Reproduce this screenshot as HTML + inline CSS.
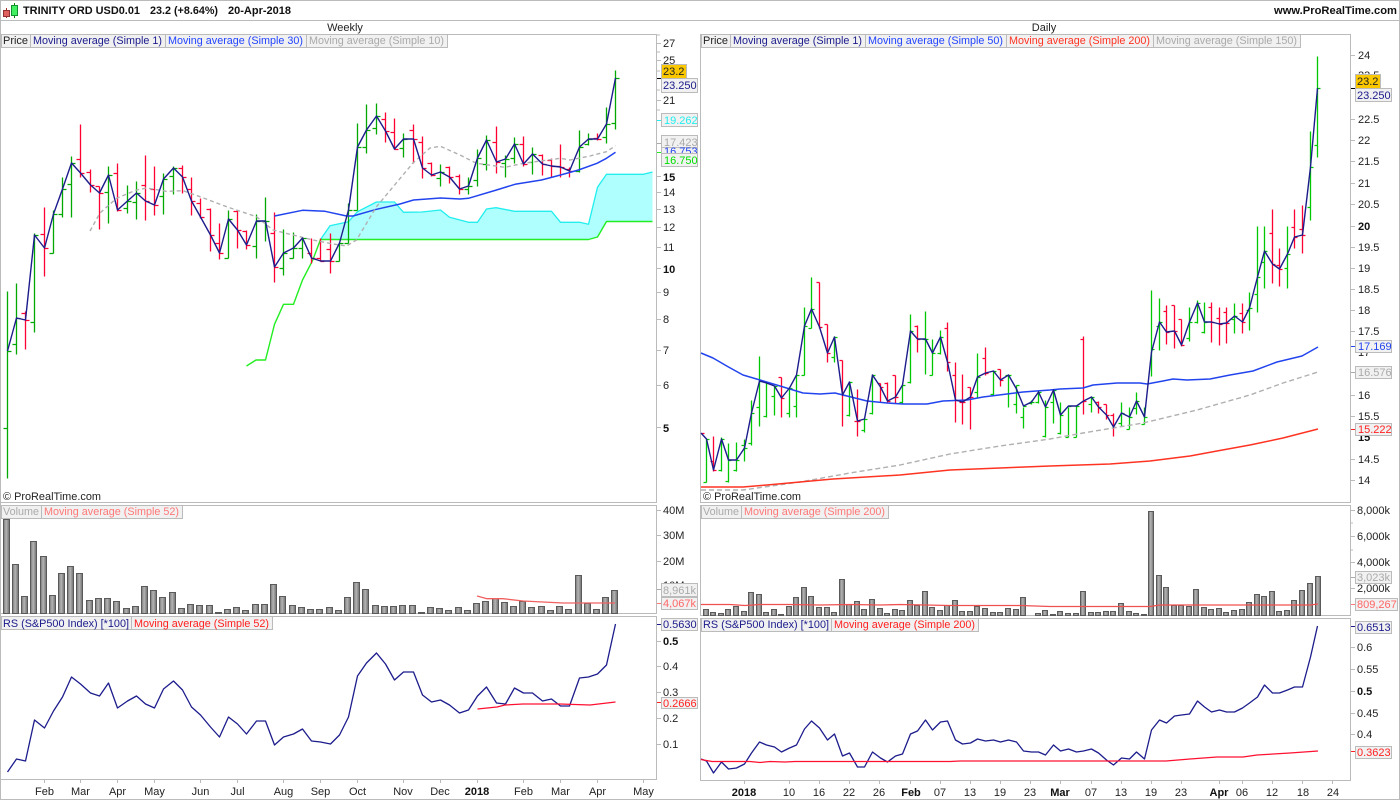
<!DOCTYPE html>
<html><head><meta charset="utf-8"><title>TRINITY ORD USD0.01</title>
<style>
html,body{margin:0;padding:0;background:#fff;width:1400px;height:800px;overflow:hidden}
svg{display:block;filter:blur(.25px)}
text{font-family:"Liberation Sans",sans-serif;font-size:11px;fill:#222}
.b{font-weight:bold;fill:#111}
.c{text-anchor:middle}
.crisp{shape-rendering:crispEdges;fill:none}
.bar{fill:none;stroke-width:1.3}
.ln{fill:none;stroke-linejoin:round}
.tag{fill:#f1f1f1;stroke:#bbb;stroke-width:1;shape-rendering:crispEdges}
.vol rect{fill:url(#vg);stroke:#5a5a5a;stroke-width:1;shape-rendering:crispEdges}
.vw rect{width:6px}
</style></head><body>
<svg width="1400" height="800" viewBox="0 0 1400 800" xmlns="http://www.w3.org/2000/svg">
<defs><linearGradient id="vg" x1="0" x2="1" y1="0" y2="0"><stop offset="0" stop-color="#777"/><stop offset=".45" stop-color="#b4b4b4"/><stop offset="1" stop-color="#6e6e6e"/></linearGradient></defs>

<!-- frames -->
<g class="crisp" stroke="#bbb">
<rect x="0.5" y="0.5" width="1399" height="799"/>
<path d="M0 20.5H1400"/>
<rect x="0.5" y="34.5" width="656" height="468"/>
<rect x="0.5" y="505.5" width="656" height="108"/>
<rect x="0.5" y="616.5" width="656" height="163"/>
<rect x="700.5" y="34.5" width="650" height="468"/>
<rect x="700.5" y="505.5" width="650" height="110"/>
<rect x="700.5" y="618.5" width="650" height="162"/>
<!-- axis ticks -->
<path d="M657 35H660M657 43.5H661M657 52H660M657 60.5H661M657 71H660M657 90H660M657 100.5H661M657 110H660M657 176.5H661M657 192.5H661M657 209.5H661M657 227.5H661M657 247.5H661M657 268.5H661M657 292.5H661M657 319.5H661M657 350.5H661M657 385.5H661M657 427.5H661"/>
<path d="M657 510.5H661M657 535.5H661M657 561.5H661M657 641.5H661M657 666.5H661M657 692.5H661M657 718.5H661M657 744.5H661"/>
<path d="M1351 55.5H1355M1351 119.5H1355M1351 140.5H1355M1351 161.5H1355M1351 183.5H1355M1351 204.5H1355M1351 226.5H1355M1351 247.5H1355M1351 268.5H1355M1351 289.5H1355M1351 310.5H1355M1351 331.5H1355M1351 395.5H1355M1351 416.5H1355M1351 459.5H1355M1351 480.5H1355"/>
<path d="M1351 510.5H1355M1351 523H1353M1351 536.5H1355M1351 550H1353M1351 562.5H1355M1351 588.5H1355M1351 647.5H1355M1351 669.5H1355M1351 691.5H1355M1351 713.5H1355M1351 734.5H1355"/>
<!-- date ticks -->
<path d="M44.5 780V783M80.5 780V783M117.5 780V783M154.5 780V783M200.5 780V783M237.5 780V783M283.5 780V783M320.5 780V783M357.5 780V783M403.5 780V783M440.5 780V783M477.5 780V783M523.5 780V783M560.5 780V783M597.5 780V783M643.5 780V783"/>
<path d="M744.5 781V784M789.5 781V784M819.5 781V784M849.5 781V784M879.5 781V784M910.5 781V784M940.5 781V784M970.5 781V784M1000.5 781V784M1030.5 781V784M1060.5 781V784M1091.5 781V784M1121.5 781V784M1151.5 781V784M1181.5 781V784M1219.5 781V784M1242.5 781V784M1272.5 781V784M1302.5 781V784M1332.5 781V784"/>
</g>

<!-- title -->
<g shape-rendering="crispEdges">
<path d="M6.5 8V18" stroke="#a03030"/><rect x="3.5" y="10.5" width="6" height="6" fill="#e06060" stroke="#903030"/>
<path d="M14.5 3V18" stroke="#108010"/><rect x="11.5" y="5.5" width="6" height="10" fill="#40f060" stroke="#109030"/>
</g>
<text x="23" y="14" class="b" textLength="117" lengthAdjust="spacingAndGlyphs">TRINITY ORD USD0.01</text>
<text x="150" y="14" class="b" textLength="68" lengthAdjust="spacingAndGlyphs">23.2 (+8.64%)</text>
<text x="228" y="14" class="b" textLength="63" lengthAdjust="spacingAndGlyphs">20-Apr-2018</text>
<text x="1274" y="14" class="b" textLength="123" lengthAdjust="spacingAndGlyphs">www.ProRealTime.com</text>
<text x="345" y="31" class="c">Weekly</text>
<text x="1044" y="31" class="c">Daily</text>

<!-- WEEKLY PRICE -->
<path d="M320.5 239.5L330 225.7L348.5 221.7L357.5 211.7L376.5 202L394.5 202L403.5 212.3L422 212L440.5 210L449.5 217.3L460 220L468.5 222.3L477.5 222.3L486.5 209L496 207.7L514.5 211.3L551.5 211.3L560.5 222.3L579.5 222.3L588.5 224.3L597.5 187.3L606.5 174.3L643.5 174.3L652.5 172V221.5H606.5L597.5 237.5L588.5 239.5Z" fill="#b0ffff"/>
<path class="ln" stroke="#22eeee" stroke-width="1.3" d="M320.5 239.5L330 225.7L348.5 221.7L357.5 211.7L376.5 202L394.5 202L403.5 212.3L422 212L440.5 210L449.5 217.3L460 220L468.5 222.3L477.5 222.3L486.5 209L496 207.7L514.5 211.3L551.5 211.3L560.5 222.3L579.5 222.3L588.5 224.3L597.5 187.3L606.5 174.3L643.5 174.3L652.5 172"/>
<path class="ln" stroke="#22ee22" stroke-width="1.4" d="M246.5 366L256 360H265.5L274.5 324.3L283.5 304.3H293.5L302.5 280L312.5 260.7L320.5 239.5H588.5L597.5 237L606.5 221.5H652.5"/>

<g transform="translate(0 .5)">
<path class="bar" stroke="#00a800" d="M7.5 291V478M3.5 428H7.5M7.5 351H11.5M16.5 283V354M12.5 344H16.5M16.5 318H20.5M34.5 233V332M30.5 322H34.5M34.5 235H38.5M53.5 210V253M49.5 253H53.5M53.5 214H57.5M62.5 177V217M58.5 214H62.5M62.5 189H66.5M71.5 156V217M67.5 184H71.5M71.5 163H75.5M108.5 166V223M104.5 192H108.5M108.5 175H112.5M127.5 185V213M123.5 208H127.5M127.5 201H131.5M136.5 181V219M132.5 202H136.5M136.5 193H140.5M163.5 173V214M159.5 196H163.5M163.5 179H167.5M173.5 166V194M169.5 176H173.5M173.5 168H177.5M228.5 210V258M224.5 258H228.5M228.5 219H232.5M256.5 214V258M252.5 246H256.5M256.5 221H260.5M265.5 197V241M261.5 221H265.5M265.5 221H269.5M283.5 229V275M279.5 268H283.5M283.5 253H287.5M293.5 232V258M289.5 258H293.5M293.5 248H297.5M302.5 238V258M298.5 248H302.5M302.5 238H306.5M339.5 243V261M335.5 261H339.5M339.5 243H343.5M348.5 203V243M344.5 243H348.5M348.5 210H352.5M357.5 123V210M353.5 210H357.5M357.5 147H361.5M366.5 104V153M362.5 147H366.5M366.5 130H370.5M376.5 103V134M372.5 128H376.5M376.5 116H380.5M403.5 133V157M399.5 148H403.5M403.5 139H407.5M440.5 164V186M436.5 178H440.5M440.5 172H444.5M468.5 177V194M464.5 189H468.5M468.5 186H472.5M477.5 149V186M473.5 180H477.5M477.5 158H481.5M486.5 135V170M482.5 164H486.5M486.5 140H490.5M505.5 155V177M501.5 163H505.5M505.5 159H509.5M514.5 137V163M510.5 158H514.5M514.5 144H518.5M532.5 147V174M528.5 162H532.5M532.5 154H536.5M579.5 130V172M575.5 171H579.5M579.5 147H583.5M588.5 133V145M584.5 144H588.5M588.5 139H592.5M606.5 107V143M602.5 137H606.5M606.5 124H610.5M615.5 70V129M611.5 123H615.5M615.5 78H619.5"/>
<path class="bar" stroke="#ff0033" d="M25.5 311V349M21.5 313H25.5M25.5 320H29.5M44.5 207V276M40.5 234H44.5M44.5 248H48.5M80.5 124V177M76.5 159H80.5M80.5 173H84.5M90.5 169V192M86.5 172H90.5M90.5 185H94.5M99.5 186V229M95.5 186H99.5M99.5 193H103.5M117.5 163V211M113.5 173H117.5M117.5 210H121.5M145.5 155V220M141.5 185H145.5M145.5 201H149.5M154.5 166V215M150.5 189H154.5M154.5 205H158.5M182.5 165V193M178.5 168H182.5M182.5 177H186.5M191.5 177V215M187.5 189H191.5M191.5 201H195.5M200.5 198V218M196.5 203H200.5M200.5 217H204.5M210.5 208V251M206.5 209H210.5M210.5 235H214.5M219.5 223V259M215.5 243H219.5M219.5 253H223.5M237.5 210V248M233.5 211H237.5M237.5 230H241.5M246.5 230V249M242.5 231H246.5M246.5 245H250.5M274.5 212V282M270.5 233H274.5M274.5 267H278.5M311.5 238V263M307.5 253H311.5M311.5 258H315.5M320.5 238V260M316.5 258H320.5M320.5 261H324.5M330.5 233V273M326.5 249H330.5M330.5 261H334.5M385.5 112V142M381.5 119H385.5M385.5 131H389.5M394.5 118V149M390.5 132H394.5M394.5 149H398.5M413.5 124V163M409.5 130H413.5M413.5 139H417.5M422.5 136V178M418.5 142H422.5M422.5 168H426.5M431.5 162V176M427.5 163H431.5M431.5 175H435.5M449.5 166V183M445.5 167H449.5M449.5 177H453.5M459.5 174V194M455.5 176H459.5M459.5 189H463.5M496.5 126V173M492.5 142H496.5M496.5 162H500.5M523.5 136V166M519.5 144H523.5M523.5 164H527.5M542.5 154V175M538.5 155H542.5M542.5 164H546.5M551.5 158V177M547.5 160H551.5M551.5 166H555.5M560.5 144V177M556.5 166H560.5M560.5 167H564.5M569.5 167V177M565.5 169H569.5M569.5 171H573.5M597.5 133V140M593.5 138H597.5M597.5 139H601.5"/>
</g>
<path class="ln" stroke="#2244ee" stroke-width="1.5" d="M274.5 216L302.5 210.3L325 211.3L346.5 216L353 216L376.5 209.3L400 204L413.5 200L440.5 198L460 199L468.5 198.3L496.5 190L515 184.3L541.5 180L560.5 175L578.5 170L597 163.3L606.5 158.3L615.5 152.3"/>
<path class="ln" stroke="#b0b0b0" stroke-width="1.4" stroke-dasharray="4 3" d="M90 231L100 213L116.5 198.3L136.5 190L146.5 188L166.5 191.3L183 190.7L200 196.7L226.5 206.7L256.5 216.7L273 230L313 240L333 244L346.5 246L356.5 240L376.5 206.7L413 163L430 148L440.5 146.3L460 155L476.5 163.3L505 167.3L523.5 163.3L560.5 158.3L570 160L590 156L606.5 151.7L615.5 145.7"/>
<polyline class="ln" stroke="#1c1c8c" stroke-width="1.4" points="7.5,351 16.5,318 25.5,320 34.5,235 44.5,248 53.5,214 62.5,189 71.5,163 80.5,173 90.5,185 99.5,193 108.5,175 117.5,210 127.5,201 136.5,193 145.5,201 154.5,205 163.5,179 173.5,168 182.5,177 191.5,201 200.5,217 210.5,235 219.5,253 228.5,219 237.5,230 246.5,245 256.5,221 265.5,221 274.5,267 283.5,253 293.5,248 302.5,238 311.5,258 320.5,261 330.5,261 339.5,243 348.5,210 357.5,147 366.5,130 376.5,116 385.5,131 394.5,149 403.5,139 413.5,139 422.5,168 431.5,175 440.5,172 449.5,177 459.5,189 468.5,186 477.5,158 486.5,140 496.5,162 505.5,159 514.5,144 523.5,164 532.5,154 542.5,164 551.5,166 560.5,167 569.5,171 579.5,147 588.5,139 597.5,139 606.5,124 615.5,78"/>

<!-- DAILY PRICE -->
<g transform="translate(0 .5)">
<path class="bar" stroke="#00c800" d="M706.5 438V482M703.5 482H706.5M706.5 439H709.5M721.5 437V471M718.5 470H721.5M721.5 439H724.5M728.5 443V482M725.5 481H728.5M728.5 460H731.5M736.5 442V471M733.5 470H736.5M736.5 460H739.5M744.5 439V461M741.5 445H744.5M744.5 448H747.5M751.5 400V445M748.5 443H751.5M751.5 413H754.5M759.5 356V426M756.5 407H759.5M759.5 381H762.5M766.5 383V417M763.5 416H766.5M766.5 383H769.5M774.5 385V415M771.5 396H774.5M774.5 386H777.5M789.5 387V417M786.5 413H789.5M789.5 388H792.5M796.5 375V417M793.5 406H796.5M796.5 375H799.5M804.5 307V375M801.5 375H804.5M804.5 326H807.5M811.5 277V328M808.5 328H811.5M811.5 309H814.5M834.5 336V362M831.5 357H834.5M834.5 337H837.5M849.5 381V416M846.5 415H849.5M849.5 382H852.5M864.5 419V432M861.5 430H864.5M864.5 419H867.5M872.5 374V414M869.5 413H872.5M872.5 375H875.5M902.5 385V403M899.5 402H902.5M902.5 385H905.5M910.5 314V383M907.5 382H910.5M910.5 331H913.5M925.5 311V374M922.5 339H925.5M925.5 339H928.5M932.5 339V375M929.5 375H932.5M932.5 353H935.5M940.5 330V354M937.5 353H940.5M940.5 337H943.5M977.5 353V397M974.5 392H977.5M977.5 377H980.5M993.5 370V395M990.5 394H993.5M993.5 371H996.5M1008.5 375V407M1005.5 375H1008.5M1008.5 375H1011.5M1016.5 385V413M1013.5 404H1016.5M1016.5 385H1019.5M1023.5 407V428M1020.5 417H1023.5M1023.5 406H1026.5M1031.5 400V404M1028.5 403H1031.5M1031.5 402H1034.5M1038.5 392V403M1035.5 402H1038.5M1038.5 392H1041.5M1045.5 400V437M1042.5 436H1045.5M1045.5 407H1048.5M1053.5 389V423M1050.5 402H1053.5M1053.5 390H1056.5M1060.5 402V434M1057.5 433H1060.5M1060.5 415H1063.5M1068.5 407V437M1065.5 437H1068.5M1068.5 406H1071.5M1076.5 406V437M1073.5 437H1076.5M1076.5 406H1079.5M1091.5 397V412M1088.5 404H1091.5M1091.5 397H1094.5M1121.5 402V426M1118.5 423H1121.5M1121.5 413H1124.5M1129.5 407V429M1126.5 429H1129.5M1129.5 417H1132.5M1136.5 392V414M1133.5 408H1136.5M1136.5 401H1139.5M1144.5 407V424M1141.5 424H1144.5M1144.5 417H1147.5M1151.5 290V376M1151.5 349H1154.5M1159.5 298V350M1156.5 326H1159.5M1159.5 322H1162.5M1189.5 307V341M1186.5 338H1189.5M1189.5 322H1192.5M1197.5 300V323M1194.5 322H1197.5M1197.5 303H1200.5M1204.5 302V333M1201.5 332H1204.5M1204.5 322H1207.5M1234.5 303V333M1231.5 319H1234.5M1234.5 316H1237.5M1249.5 292V330M1246.5 310H1249.5M1249.5 308H1252.5M1257.5 226V312M1254.5 294H1257.5M1257.5 277H1260.5M1264.5 226V288M1261.5 262H1264.5M1264.5 251H1267.5M1287.5 226V288M1284.5 268H1287.5M1287.5 254H1290.5M1310.5 131V220M1307.5 207H1310.5M1310.5 167H1313.5M1317.5 56V157M1314.5 145H1317.5M1317.5 88H1320.5"/>
<path class="bar" stroke="#ff0033" d="M701.5 433H704.5M713.5 436V471M710.5 461H713.5M713.5 470H716.5M781.5 377V417M778.5 377H781.5M781.5 398H784.5M819.5 282V328M816.5 282H819.5M819.5 327H822.5M827.5 324V362M824.5 324H827.5M827.5 353H830.5M842.5 360V426M839.5 360H842.5M842.5 395H845.5M857.5 389V436M854.5 421H857.5M857.5 421H860.5M880.5 383V402M877.5 383H880.5M880.5 387H883.5M887.5 382V403M884.5 383H887.5M887.5 401H890.5M895.5 375V403M892.5 375H895.5M895.5 397H898.5M917.5 325V352M914.5 326H917.5M917.5 339H920.5M947.5 322V371M944.5 328H947.5M947.5 362H950.5M955.5 362V422M952.5 375H955.5M955.5 400H958.5M962.5 374V424M959.5 402H962.5M962.5 402H965.5M970.5 387V429M967.5 387H970.5M970.5 397H973.5M985.5 347V375M982.5 358H985.5M985.5 373H988.5M1000.5 369V386M997.5 369H1000.5M1000.5 380H1003.5M1083.5 336V414M1080.5 339H1083.5M1083.5 401H1086.5M1098.5 401V413M1095.5 402H1098.5M1098.5 407H1101.5M1106.5 404V419M1103.5 404H1106.5M1106.5 415H1109.5M1113.5 413V436M1110.5 415H1113.5M1113.5 427H1116.5M1166.5 305V344M1163.5 311H1166.5M1166.5 332H1169.5M1174.5 305V348M1171.5 305H1174.5M1174.5 331H1177.5M1181.5 319V346M1178.5 319H1181.5M1181.5 345H1184.5M1211.5 302V342M1208.5 307H1211.5M1211.5 322H1214.5M1219.5 307V345M1216.5 318H1219.5M1219.5 324H1222.5M1226.5 307V343M1223.5 312H1226.5M1226.5 323H1229.5M1242.5 303V333M1239.5 313H1242.5M1242.5 322H1245.5M1272.5 209V283M1269.5 233H1272.5M1272.5 264H1275.5M1279.5 248V286M1276.5 265H1279.5M1279.5 269H1282.5M1294.5 209V248M1291.5 227H1294.5M1294.5 237H1297.5M1302.5 205V253M1299.5 229H1302.5M1302.5 235H1305.5"/>
</g>
<path class="ln" stroke="#2244ee" stroke-width="1.5" d="M701 353L713 358L728.5 367L743 375L760 380L780 386L803 393L820 394L835 393L847 396L867 401L887 403L903 404L927 404L943 401L967 400L983 397L1007 394L1023 392L1050 390L1060 389L1083 388L1093 385L1117 383L1140 383L1147 384L1163 381L1173 379L1187 380L1210 379L1230 375L1253 371L1277 362L1302 356L1318 347"/>
<path class="ln" stroke="#b0b0b0" stroke-width="1.4" stroke-dasharray="5 3" d="M701 490L743 490L800 482L850 473L900 465L950 454L1000 446L1050 439L1083 433L1143 423L1197 410L1250 395L1283 383L1318 372"/>
<path class="ln" stroke="#ff3322" stroke-width="1.5" d="M701 487L743 487L767 485L833 479L900 475L950 470L1000 468L1050 466L1110 464L1150 461L1190 456L1217 451L1250 445L1283 438L1318 429"/>
<polyline class="ln" stroke="#1c1c8c" stroke-width="1.4" points="701,433 706.5,439 713.5,470 721.5,439 728.5,460 736.5,460 744.5,448 751.5,413 759.5,381 766.5,383 774.5,386 781.5,398 789.5,388 796.5,375 804.5,326 811.5,309 819.5,327 827.5,353 834.5,337 842.5,395 849.5,382 857.5,421 864.5,419 872.5,375 880.5,387 887.5,401 895.5,397 902.5,385 910.5,331 917.5,339 925.5,339 932.5,353 940.5,337 947.5,362 955.5,400 962.5,402 970.5,397 977.5,377 985.5,373 993.5,371 1000.5,380 1008.5,375 1016.5,389 1023.5,406 1031.5,402 1038.5,392 1045.5,407 1053.5,390 1060.5,415 1068.5,406 1076.5,406 1083.5,401 1091.5,397 1098.5,407 1106.5,415 1113.5,427 1121.5,413 1129.5,417 1136.5,401 1144.5,417 1151.5,352 1159.5,322 1166.5,332 1174.5,331 1181.5,345 1189.5,322 1197.5,303 1204.5,322 1211.5,322 1219.5,324 1226.5,323 1234.5,316 1242.5,322 1249.5,308 1257.5,277 1264.5,251 1272.5,264 1279.5,269 1287.5,254 1294.5,237 1302.5,235 1310.5,167 1317.5,88"/>

<!-- WEEKLY VOLUME -->
<g class="vol vw">
<rect x="3.5" y="519.5" width="7" height="94"/><rect x="12.5" y="564.5" width="7" height="49"/><rect x="21.5" y="596.5" width="7" height="17"/><rect x="30.5" y="541.5" width="7" height="72"/><rect x="40.5" y="556.5" width="7" height="57"/><rect x="49.5" y="595.5" width="7" height="18"/><rect x="58.5" y="573.5" width="7" height="40"/><rect x="67.5" y="566.5" width="7" height="47"/><rect x="76.5" y="573.5" width="7" height="40"/><rect x="86.5" y="600.5" width="7" height="13"/><rect x="95.5" y="598.5" width="7" height="15"/><rect x="104.5" y="598.5" width="7" height="15"/><rect x="113.5" y="601.5" width="7" height="12"/><rect x="123.5" y="608.5" width="7" height="5"/><rect x="132.5" y="606.5" width="7" height="7"/><rect x="141.5" y="586.5" width="7" height="27"/><rect x="150.5" y="590.5" width="7" height="23"/><rect x="159.5" y="597.5" width="7" height="16"/><rect x="169.5" y="592.5" width="7" height="21"/><rect x="178.5" y="608.5" width="7" height="5"/><rect x="187.5" y="604.5" width="7" height="9"/><rect x="196.5" y="605.5" width="7" height="8"/><rect x="206.5" y="605.5" width="7" height="8"/><rect x="215.5" y="612.5" width="7" height="1"/><rect x="224.5" y="609.5" width="7" height="4"/><rect x="233.5" y="607.5" width="7" height="6"/><rect x="242.5" y="610.5" width="7" height="3"/><rect x="252.5" y="604.5" width="7" height="9"/><rect x="261.5" y="604.5" width="7" height="9"/><rect x="270.5" y="584.5" width="7" height="29"/><rect x="279.5" y="596.5" width="7" height="17"/><rect x="289.5" y="605.5" width="7" height="8"/><rect x="298.5" y="607.5" width="7" height="6"/><rect x="307.5" y="609.5" width="7" height="4"/><rect x="316.5" y="609.5" width="7" height="4"/><rect x="326.5" y="607.5" width="7" height="6"/><rect x="335.5" y="610.5" width="7" height="3"/><rect x="344.5" y="597.5" width="7" height="16"/><rect x="353.5" y="582.5" width="7" height="31"/><rect x="362.5" y="589.5" width="7" height="24"/><rect x="372.5" y="605.5" width="7" height="8"/><rect x="381.5" y="606.5" width="7" height="7"/><rect x="390.5" y="606.5" width="7" height="7"/><rect x="399.5" y="605.5" width="7" height="8"/><rect x="409.5" y="605.5" width="7" height="8"/><rect x="418.5" y="612.5" width="7" height="1"/><rect x="427.5" y="607.5" width="7" height="6"/><rect x="436.5" y="608.5" width="7" height="5"/><rect x="445.5" y="610.5" width="7" height="3"/><rect x="455.5" y="607.5" width="7" height="6"/><rect x="464.5" y="610.5" width="7" height="3"/><rect x="473.5" y="603.5" width="7" height="10"/><rect x="482.5" y="601.5" width="7" height="12"/><rect x="492.5" y="598.5" width="7" height="15"/><rect x="501.5" y="602.5" width="7" height="11"/><rect x="510.5" y="606.5" width="7" height="7"/><rect x="519.5" y="601.5" width="7" height="12"/><rect x="528.5" y="607.5" width="7" height="6"/><rect x="538.5" y="606.5" width="7" height="7"/><rect x="547.5" y="610.5" width="7" height="3"/><rect x="556.5" y="606.5" width="7" height="7"/><rect x="565.5" y="609.5" width="7" height="4"/><rect x="575.5" y="575.5" width="7" height="38"/><rect x="584.5" y="603.5" width="7" height="10"/><rect x="593.5" y="609.5" width="7" height="4"/><rect x="602.5" y="597.5" width="7" height="16"/><rect x="611.5" y="590.5" width="7" height="23"/>
</g>
<path class="ln" stroke="#f06060" stroke-width="1.3" d="M477 596L487 598.7L503 598.7L523 601L563 603L615 603"/>

<!-- DAILY VOLUME -->
<g class="vol">
<rect x="703.5" y="609.5" width="5" height="6"/><rect x="710.5" y="612.5" width="5" height="3"/><rect x="718.5" y="613.5" width="5" height="2"/><rect x="725.5" y="609.5" width="5" height="6"/><rect x="733.5" y="606.5" width="5" height="9"/><rect x="741.5" y="611.5" width="5" height="4"/><rect x="748.5" y="592.5" width="5" height="23"/><rect x="756.5" y="594.5" width="5" height="21"/><rect x="763.5" y="612.5" width="5" height="3"/><rect x="771.5" y="609.5" width="5" height="6"/><rect x="778.5" y="614.5" width="5" height="1"/><rect x="786.5" y="606.5" width="5" height="9"/><rect x="793.5" y="597.5" width="5" height="18"/><rect x="801.5" y="587.5" width="5" height="28"/><rect x="808.5" y="596.5" width="5" height="19"/><rect x="816.5" y="607.5" width="5" height="8"/><rect x="824.5" y="607.5" width="5" height="8"/><rect x="831.5" y="612.5" width="5" height="3"/><rect x="839.5" y="579.5" width="5" height="36"/><rect x="846.5" y="604.5" width="5" height="11"/><rect x="854.5" y="601.5" width="5" height="14"/><rect x="861.5" y="609.5" width="5" height="6"/><rect x="869.5" y="599.5" width="5" height="16"/><rect x="877.5" y="608.5" width="5" height="7"/><rect x="884.5" y="613.5" width="5" height="2"/><rect x="892.5" y="609.5" width="5" height="6"/><rect x="899.5" y="610.5" width="5" height="5"/><rect x="907.5" y="600.5" width="5" height="15"/><rect x="914.5" y="605.5" width="5" height="10"/><rect x="922.5" y="591.5" width="5" height="24"/><rect x="929.5" y="607.5" width="5" height="8"/><rect x="937.5" y="610.5" width="5" height="5"/><rect x="944.5" y="605.5" width="5" height="10"/><rect x="952.5" y="600.5" width="5" height="15"/><rect x="959.5" y="611.5" width="5" height="4"/><rect x="967.5" y="611.5" width="5" height="4"/><rect x="974.5" y="606.5" width="5" height="9"/><rect x="982.5" y="608.5" width="5" height="7"/><rect x="990.5" y="612.5" width="5" height="3"/><rect x="997.5" y="612.5" width="5" height="3"/><rect x="1005.5" y="608.5" width="5" height="7"/><rect x="1013.5" y="609.5" width="5" height="6"/><rect x="1020.5" y="597.5" width="5" height="18"/><rect x="1035.5" y="613.5" width="5" height="2"/><rect x="1042.5" y="610.5" width="5" height="5"/><rect x="1050.5" y="614.5" width="5" height="1"/><rect x="1057.5" y="611.5" width="5" height="4"/><rect x="1065.5" y="613.5" width="5" height="2"/><rect x="1073.5" y="613.5" width="5" height="2"/><rect x="1080.5" y="591.5" width="5" height="24"/><rect x="1088.5" y="612.5" width="5" height="3"/><rect x="1095.5" y="612.5" width="5" height="3"/><rect x="1103.5" y="611.5" width="5" height="4"/><rect x="1110.5" y="611.5" width="5" height="4"/><rect x="1118.5" y="603.5" width="5" height="12"/><rect x="1126.5" y="611.5" width="5" height="4"/><rect x="1133.5" y="613.5" width="5" height="2"/><rect x="1141.5" y="614.5" width="5" height="1"/><rect x="1148.5" y="511.5" width="5" height="104"/><rect x="1156.5" y="575.5" width="5" height="40"/><rect x="1163.5" y="587.5" width="5" height="28"/><rect x="1171.5" y="605.5" width="5" height="10"/><rect x="1178.5" y="605.5" width="5" height="10"/><rect x="1186.5" y="606.5" width="5" height="9"/><rect x="1193.5" y="589.5" width="5" height="26"/><rect x="1201.5" y="607.5" width="5" height="8"/><rect x="1208.5" y="609.5" width="5" height="6"/><rect x="1216.5" y="608.5" width="5" height="7"/><rect x="1223.5" y="612.5" width="5" height="3"/><rect x="1231.5" y="610.5" width="5" height="5"/><rect x="1239.5" y="609.5" width="5" height="6"/><rect x="1246.5" y="602.5" width="5" height="13"/><rect x="1254.5" y="594.5" width="5" height="21"/><rect x="1261.5" y="596.5" width="5" height="19"/><rect x="1269.5" y="591.5" width="5" height="24"/><rect x="1276.5" y="611.5" width="5" height="4"/><rect x="1284.5" y="610.5" width="5" height="5"/><rect x="1291.5" y="600.5" width="5" height="15"/><rect x="1299.5" y="590.5" width="5" height="25"/><rect x="1307.5" y="583.5" width="5" height="32"/><rect x="1315.5" y="576.5" width="5" height="39"/>
</g>
<path class="ln" stroke="#f05050" stroke-width="1.3" d="M701 604.5L730 604.5L745 605.5L760 604.5L790 604.5L820 605L850 604.5L880 605L900 604.5L950 605.5L1020 605.5L1050 606.5L1150 606.5L1160 605L1310 605L1318 604"/>

<!-- RS WEEKLY -->
<polyline class="ln" stroke="#1c1c8c" stroke-width="1.3" points="7.5,772 16.5,759 25.5,761 34.5,720 44.5,728 53.5,711 62.5,697 71.5,677 80.5,684 90.5,693 99.5,696 108.5,683 117.5,708 127.5,701 136.5,696 145.5,704 154.5,708 163.5,689 173.5,681 182.5,690 191.5,707 200.5,715 210.5,727 219.5,737 228.5,717 237.5,724 246.5,734 256.5,721 265.5,721 274.5,745 283.5,737 293.5,734 302.5,729 311.5,741 320.5,742 330.5,744 339.5,735 348.5,717 357.5,676 366.5,663 376.5,653 385.5,664 394.5,680 403.5,672 413.5,672 422.5,695 431.5,702 440.5,700 449.5,705 459.5,713 468.5,710 477.5,696 486.5,687 496.5,703 505.5,704 514.5,688 523.5,693 532.5,693 542.5,701 551.5,699 560.5,706 569.5,706 579.5,678 588.5,677 597.5,674 606.5,665 615.5,624"/>
<path class="ln" stroke="#ff1030" stroke-width="1.3" d="M477.5 709L497 707L505 705L523 704L560 704L590 705L615.5 702"/>

<!-- RS DAILY -->
<polyline class="ln" stroke="#1c1c8c" stroke-width="1.3" points="701,759 706.5,761 713.5,773 721.5,762 728.5,769 736.5,768 744.5,764 751.5,753 759.5,742 766.5,745 774.5,747 781.5,752 789.5,748 796.5,745 804.5,729 811.5,721 819.5,728 827.5,740 834.5,734 842.5,756 849.5,753 857.5,767 864.5,767 872.5,752 880.5,758 887.5,762 895.5,756 902.5,754 910.5,734 917.5,731 925.5,720 932.5,730 940.5,722 947.5,721 955.5,740 962.5,744 970.5,743 977.5,739 985.5,741 993.5,740 1000.5,742 1008.5,740 1016.5,742 1023.5,751 1031.5,752 1038.5,752 1045.5,755 1053.5,745 1060.5,751 1068.5,749 1076.5,752 1083.5,751 1091.5,749 1098.5,753 1106.5,760 1113.5,765 1121.5,758 1129.5,759 1136.5,752 1144.5,759 1151.5,730 1159.5,720 1166.5,723 1174.5,716 1181.5,715 1189.5,714 1197.5,701 1204.5,707 1211.5,712 1219.5,710 1226.5,712 1234.5,712 1242.5,708 1249.5,703 1257.5,697 1264.5,685 1272.5,693 1279.5,693 1287.5,690 1294.5,687 1302.5,687 1310.5,657 1317.5,626"/>
<path class="ln" stroke="#ff1030" stroke-width="1.3" d="M701 759.5L712 761.5L750 761.5L760 762.5L770 761.5L785 762L795 761.5L950 761.5L960 761L1050 761L1166 761L1190 759L1217 757L1243 757L1257 755L1290 753L1318 751"/>

<!-- legends -->
<g class="crisp">
<rect class="tag" x="1.5" y="34.5" width="29" height="13"/><rect class="tag" x="30.5" y="34.5" width="135" height="13"/><rect class="tag" x="165.5" y="34.5" width="141" height="13"/><rect class="tag" x="306.5" y="34.5" width="141" height="13"/>
<rect class="tag" x="701.5" y="34.5" width="29" height="13"/><rect class="tag" x="730.5" y="34.5" width="135" height="13"/><rect class="tag" x="865.5" y="34.5" width="141" height="13"/><rect class="tag" x="1006.5" y="34.5" width="147" height="13"/><rect class="tag" x="1153.5" y="34.5" width="147" height="13"/>
<rect class="tag" x="1.5" y="505.5" width="40" height="13"/><rect class="tag" x="41.5" y="505.5" width="141" height="13"/>
<rect class="tag" x="701.5" y="505.5" width="40" height="13"/><rect class="tag" x="741.5" y="505.5" width="147" height="13"/>
<rect class="tag" x="1.5" y="616.5" width="130" height="13"/><rect class="tag" x="131.5" y="616.5" width="141" height="13"/>
<rect class="tag" x="701.5" y="618.5" width="130" height="13"/><rect class="tag" x="831.5" y="618.5" width="147" height="13"/>
</g>
<g>
<text x="3" y="44" textLength="25" lengthAdjust="spacingAndGlyphs">Price</text>
<text x="33" y="44" style="fill:#1a1a8c" textLength="129" lengthAdjust="spacingAndGlyphs">Moving average (Simple 1)</text>
<text x="168" y="44" style="fill:#2244ff" textLength="135" lengthAdjust="spacingAndGlyphs">Moving average (Simple 30)</text>
<text x="309" y="44" style="fill:#aaa" textLength="135" lengthAdjust="spacingAndGlyphs">Moving average (Simple 10)</text>
<text x="703" y="44" textLength="25" lengthAdjust="spacingAndGlyphs">Price</text>
<text x="733" y="44" style="fill:#1a1a8c" textLength="129" lengthAdjust="spacingAndGlyphs">Moving average (Simple 1)</text>
<text x="868" y="44" style="fill:#2244ff" textLength="135" lengthAdjust="spacingAndGlyphs">Moving average (Simple 50)</text>
<text x="1009" y="44" style="fill:#ff3322" textLength="141" lengthAdjust="spacingAndGlyphs">Moving average (Simple 200)</text>
<text x="1156" y="44" style="fill:#aaa" textLength="141" lengthAdjust="spacingAndGlyphs">Moving average (Simple 150)</text>
<text x="3" y="515" style="fill:#aaa" textLength="36" lengthAdjust="spacingAndGlyphs">Volume</text>
<text x="44" y="515" style="fill:#f77" textLength="135" lengthAdjust="spacingAndGlyphs">Moving average (Simple 52)</text>
<text x="703" y="515" style="fill:#aaa" textLength="36" lengthAdjust="spacingAndGlyphs">Volume</text>
<text x="744" y="515" style="fill:#f77" textLength="141" lengthAdjust="spacingAndGlyphs">Moving average (Simple 200)</text>
<text x="3" y="627" style="fill:#1a1a8c" textLength="126" lengthAdjust="spacingAndGlyphs">RS (S&amp;P500 Index) [*100]</text>
<text x="134" y="627" style="fill:#ff2020" textLength="135" lengthAdjust="spacingAndGlyphs">Moving average (Simple 52)</text>
<text x="703" y="628" style="fill:#1a1a8c" textLength="126" lengthAdjust="spacingAndGlyphs">RS (S&amp;P500 Index) [*100]</text>
<text x="834" y="628" style="fill:#ff2020" textLength="141" lengthAdjust="spacingAndGlyphs">Moving average (Simple 200)</text>
<text x="3" y="500" textLength="98" lengthAdjust="spacingAndGlyphs">© ProRealTime.com</text>
<text x="703" y="500" textLength="98" lengthAdjust="spacingAndGlyphs">© ProRealTime.com</text>
</g>

<!-- weekly axis labels -->
<text x="663" y="47">27</text><text x="663" y="64">25</text><text x="663" y="104">21</text>
<text x="663" y="181" class="b">15</text><text x="663" y="196">14</text><text x="663" y="213">13</text><text x="663" y="231">12</text><text x="663" y="251">11</text><text x="663" y="273" class="b">10</text><text x="663" y="296">9</text><text x="663" y="323">8</text><text x="663" y="354">7</text><text x="663" y="389">6</text><text x="663" y="432" class="b">5</text>
<text x="663" y="514">40M</text><text x="663" y="539">30M</text><text x="663" y="565">20M</text><text x="663" y="589">10M</text>
<text x="663" y="645" class="b">0.5</text><text x="663" y="670">0.4</text><text x="663" y="696">0.3</text><text x="663" y="722">0.2</text><text x="663" y="748">0.1</text>

<!-- daily axis labels -->
<text x="1358" y="59">24</text><text x="1358" y="79">23.5</text><text x="1358" y="123">22.5</text><text x="1358" y="144">22</text><text x="1358" y="165">21.5</text><text x="1358" y="187">21</text><text x="1358" y="208">20.5</text><text x="1358" y="230" class="b">20</text><text x="1358" y="251">19.5</text><text x="1358" y="272">19</text><text x="1358" y="293">18.5</text><text x="1358" y="314">18</text><text x="1358" y="335">17.5</text><text x="1358" y="356">17</text><text x="1358" y="399">16</text><text x="1358" y="420">15.5</text><text x="1358" y="441" class="b">15</text><text x="1358" y="463">14.5</text><text x="1358" y="484">14</text>
<text x="1357" y="514">8,000k</text><text x="1357" y="540">6,000k</text><text x="1357" y="566">4,000k</text><text x="1357" y="592">2,000k</text>
<text x="1357" y="651">0.6</text><text x="1357" y="673">0.55</text><text x="1357" y="695" class="b">0.5</text><text x="1357" y="717">0.45</text><text x="1357" y="738">0.4</text>

<!-- tags weekly -->
<g shape-rendering="crispEdges">
<path d="M657 78.5H661" stroke="#000"/><path d="M657 120.5H661" stroke="#22eeee"/><path d="M657 143.5H661" stroke="#aaa"/><path d="M657 152.5H661" stroke="#22ee22"/><path d="M657 589.5H661" stroke="#aaa"/><path d="M657 603.5H661" stroke="#f77"/><path d="M657 624.5H661" stroke="#1a1a8c"/><path d="M657 702.5H661" stroke="#f22"/>
<path d="M1351 88.5H1355" stroke="#000"/><path d="M1351 346.5H1355" stroke="#2244ee"/><path d="M1351 372.5H1355" stroke="#aaa"/><path d="M1351 429.5H1355" stroke="#f22"/><path d="M1351 577.5H1355" stroke="#aaa"/><path d="M1351 604.5H1355" stroke="#f77"/><path d="M1351 626.5H1355" stroke="#1a1a8c"/><path d="M1351 751.5H1355" stroke="#f22"/>
</g>
<rect x="661.5" y="64.5" width="25" height="14" fill="#fbc800" stroke="#bbb" shape-rendering="crispEdges"/><text x="663" y="75">23.2</text>
<rect class="tag" x="661.5" y="78.5" width="36" height="14"/><text x="663" y="89" style="fill:#1a1a8c">23.250</text>
<rect class="tag" x="661.5" y="113.5" width="36" height="13"/><text x="664" y="124" style="fill:#22eeee">19.262</text>
<rect class="tag" x="661.5" y="135.5" width="36" height="13"/><text x="664" y="146" style="fill:#aaa">17.423</text>
<rect class="tag" x="661.5" y="147.5" width="36" height="8"/><text x="664" y="155" style="fill:#2244ee">16.753</text>
<rect class="tag" x="661.5" y="153.5" width="36" height="13"/><text x="664" y="164" style="fill:#00e000">16.750</text>
<rect class="tag" x="661.5" y="583.5" width="36" height="13"/><text x="663" y="594" style="fill:#aaa">8,961k</text>
<rect class="tag" x="661.5" y="597.5" width="36" height="12"/><text x="663" y="607" style="fill:#f66">4,067k</text>
<rect class="tag" x="661.5" y="618.5" width="36" height="12"/><text x="663" y="628" style="fill:#1a1a8c">0.5630</text>
<rect class="tag" x="661.5" y="697.5" width="36" height="11"/><text x="663" y="707" style="fill:#f22">0.2666</text>

<!-- tags daily -->
<rect x="1355.5" y="74.5" width="25" height="14" fill="#fbc800" stroke="#bbb" shape-rendering="crispEdges"/><text x="1357" y="85">23.2</text>
<rect class="tag" x="1355.5" y="88.5" width="36" height="13"/><text x="1357" y="99" style="fill:#1a1a8c">23.250</text>
<rect class="tag" x="1355.5" y="340.5" width="36" height="12"/><text x="1358" y="350" style="fill:#2244ee">17.169</text>
<rect class="tag" x="1355.5" y="366.5" width="36" height="12"/><text x="1358" y="376" style="fill:#aaa">16.576</text>
<rect class="tag" x="1355.5" y="423.5" width="36" height="12"/><text x="1358" y="433" style="fill:#f22">15.222</text>
<rect class="tag" x="1355.5" y="571.5" width="36" height="12"/><text x="1357" y="581" style="fill:#aaa">3,023k</text>
<rect class="tag" x="1355.5" y="598.5" width="42" height="12"/><text x="1357" y="608" style="fill:#f66">809,267</text>
<rect class="tag" x="1355.5" y="621.5" width="36" height="12"/><text x="1357" y="631" style="fill:#1a1a8c">0.6513</text>
<rect class="tag" x="1355.5" y="746.5" width="36" height="12"/><text x="1357" y="756" style="fill:#f22">0.3623</text>

<!-- date labels -->
<g>
<text x="44.5" y="795" class="c">Feb</text><text x="80.5" y="795" class="c">Mar</text><text x="117.5" y="795" class="c">Apr</text><text x="154.5" y="795" class="c">May</text><text x="200.5" y="795" class="c">Jun</text><text x="237.5" y="795" class="c">Jul</text><text x="283.5" y="795" class="c">Aug</text><text x="320.5" y="795" class="c">Sep</text><text x="357.5" y="795" class="c">Oct</text><text x="403" y="795" class="c">Nov</text><text x="440" y="795" class="c">Dec</text><text x="477" y="795" class="c b">2018</text><text x="523.5" y="795" class="c">Feb</text><text x="560.5" y="795" class="c">Mar</text><text x="597.5" y="795" class="c">Apr</text><text x="643.5" y="795" class="c">May</text>
<text x="744" y="796" class="c b">2018</text><text x="789" y="796" class="c">10</text><text x="819" y="796" class="c">16</text><text x="849" y="796" class="c">22</text><text x="879" y="796" class="c">26</text><text x="911" y="796" class="c b">Feb</text><text x="940" y="796" class="c">07</text><text x="970" y="796" class="c">13</text><text x="1000" y="796" class="c">19</text><text x="1030" y="796" class="c">23</text><text x="1060" y="796" class="c b">Mar</text><text x="1091" y="796" class="c">07</text><text x="1121" y="796" class="c">13</text><text x="1151" y="796" class="c">19</text><text x="1181" y="796" class="c">23</text><text x="1219" y="796" class="c b">Apr</text><text x="1242" y="796" class="c">06</text><text x="1272" y="796" class="c">12</text><text x="1303" y="796" class="c">18</text><text x="1333" y="796" class="c">24</text>
</g>
</svg>
</body></html>
